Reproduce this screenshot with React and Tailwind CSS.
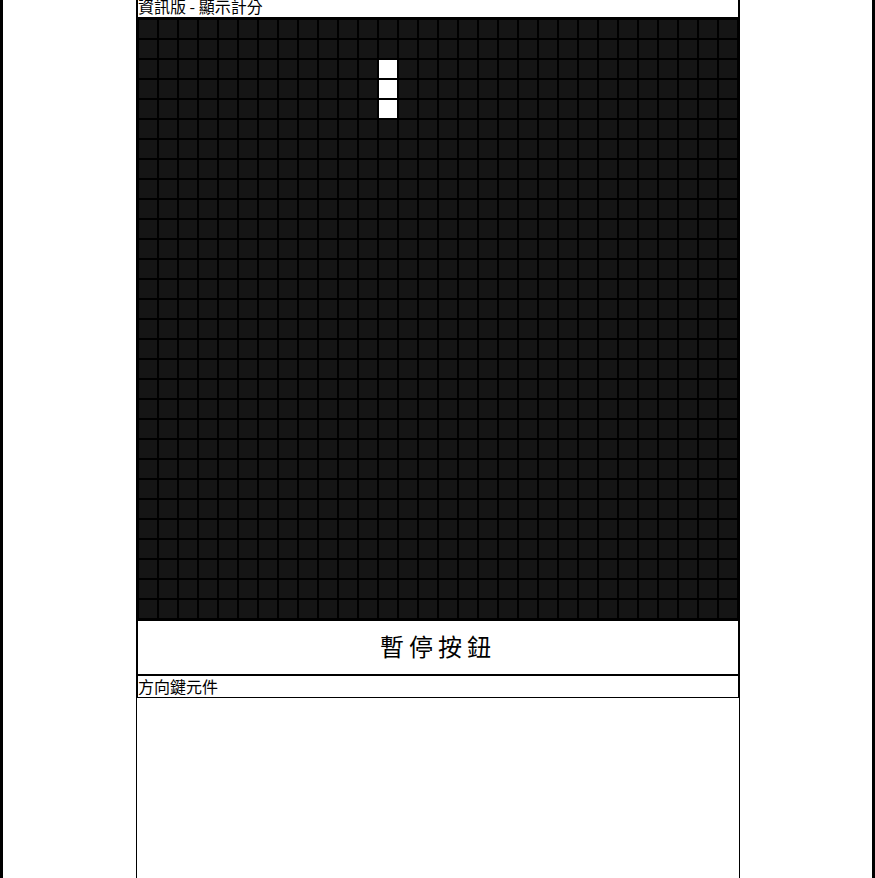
import React from "react";

const COLS = 30;
const ROWS = 30;
const snake = new Set(["12-2", "12-3", "12-4"]);

export default function App() {
  const cells = [];
  for (let r = 0; r < ROWS; r++) {
    for (let c = 0; c < COLS; c++) {
      const on = snake.has(`${c}-${r}`);
      cells.push(
        <div
          key={`${c}-${r}`}
          className={
            on
              ? "w-[20px] h-[20px] border border-black bg-white"
              : "w-[20px] h-[20px] border border-black bg-[#151515]"
          }
        />
      );
    }
  }

  return (
    <div
      className="min-h-[878px] bg-white border-x-[3px] border-black text-black"
      style={{ fontFamily: '"Noto Sans CJK TC", "Noto Sans", sans-serif' }}
    >
      <div className="ml-[133px] w-[604px]">
        <div className="border-x-2 border-black">
          <div className="h-[17px] overflow-hidden">
            <div className="text-[16px] leading-[13px] whitespace-nowrap">資訊版 - 顯示計分</div>
          </div>
          <div className="border-y-2 border-black grid grid-cols-[repeat(30,20px)]">
            {cells}
          </div>
          <div className="h-[55px] border-b-2 border-black flex items-center justify-center pb-[3px]">
            <span className="text-[24px] leading-none tracking-[5px]">暫停按鈕</span>
          </div>
          <div className="h-[22px] border-b border-black text-[16px] leading-[20px] whitespace-nowrap">
            方向鍵元件
          </div>
        </div>
        <div className="h-[300px] border-x border-b border-black" />
      </div>
    </div>
  );
}
